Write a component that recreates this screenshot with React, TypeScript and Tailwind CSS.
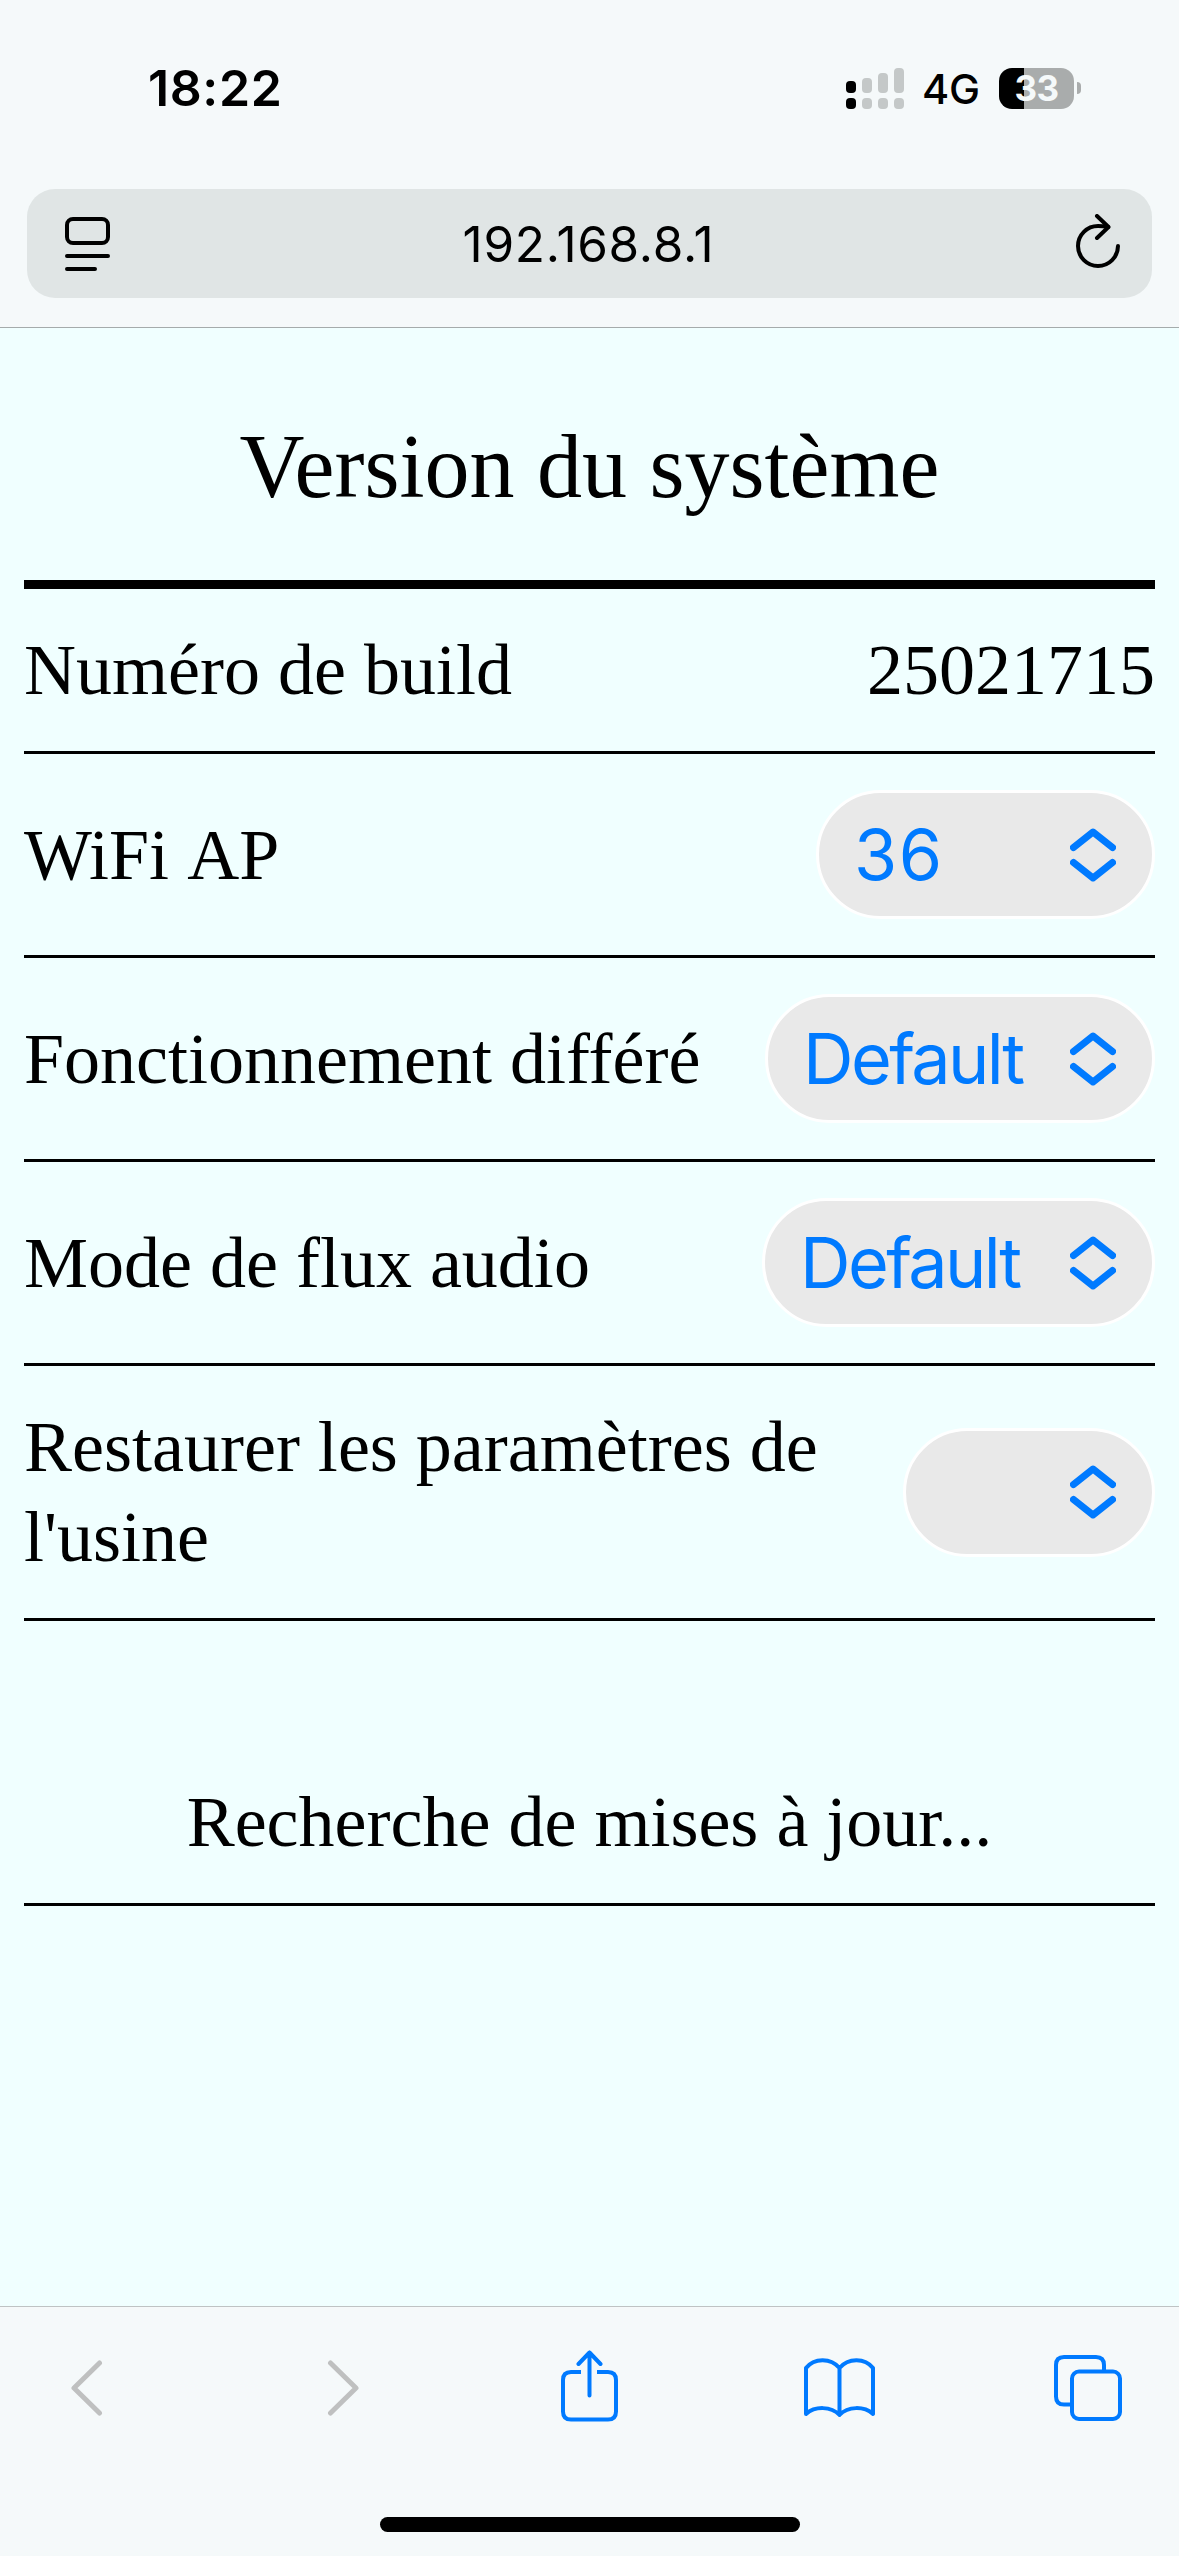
import type { ReactNode } from "react";

const bars = ["h-3", "h-[15px]", "h-5", "h-[25px]"];

const settings = [
  { label: "WiFi AP", value: "36", width: "w-[339px]", spacing: "tracking-[1.5px]" },
  { label: "Fonctionnement différé", value: "Default", width: "w-[390px]", spacing: "tracking-[-2.6px]" },
  { label: "Mode de flux audio", value: "Default", width: "w-[393px]", spacing: "tracking-[-2.6px]" },
  { label: "Restaurer les paramètres de l'usine", value: "", width: "w-[252px]", spacing: "" },
];

function StatusBar() {
  return (
    <div className="flex h-[189px] items-start justify-between pl-[148px] pr-[98px] pt-[58px]">
      <span className="text-[50px] font-semibold leading-[60px] tracking-[0.6px]">18:22</span>
      <div className="flex h-[60px] items-center">
        <div className="flex items-end gap-1.5">
          {bars.map((height, i) => (
            <div key={height} className="flex flex-col gap-[5px]">
              <div className={`${height} w-2.5 rounded ${i === 0 ? "bg-black" : "bg-[#c4c8c8]"}`} />
              <div className={`h-[11px] w-2.5 rounded ${i === 0 ? "bg-black" : "bg-[#c4c8c8]"}`} />
            </div>
          ))}
        </div>
        <span className="ml-[18px] w-[56px] whitespace-nowrap pt-0.5 text-[41.5px] font-medium leading-[60px] tracking-[-0.2px]">
          4G
        </span>
        <div className="ml-[21px] flex h-[41px] w-[75px] items-center justify-center rounded-[13px] bg-[linear-gradient(90deg,#000_25px,#a9acac_25px)]">
          <span className="text-[35px] font-bold leading-none tracking-[-0.5px] text-[#f5f9fa]">33</span>
        </div>
        <div className="ml-[3px] h-3 w-1 rounded-r-full bg-[#a9acac]" />
      </div>
    </div>
  );
}

function AddressBar() {
  return (
    <div className="mx-[27px] flex h-[109px] items-center justify-between rounded-[28px] bg-[#e0e5e5] pl-[38px] pr-8">
      <svg width="45" height="54" viewBox="0 0 45 54" fill="none" stroke="#000" strokeWidth="4" strokeLinecap="round">
        <rect x="2" y="2" width="41" height="24" rx="6" />
        <path d="M2 39h41M2 52h28" />
      </svg>
      <span className="mr-[9px] text-[49.5px] leading-[60px] tracking-[0.7px]">192.168.8.1</span>
      <svg className="mb-[5px]" width="44" height="54" viewBox="0 0 44 54" fill="none" stroke="#000" strokeWidth="4" strokeLinecap="round" strokeLinejoin="round">
        <path d="M42 32A20 20 0 1 1 22 12q5 0 10 1" />
        <path d="M21 2l11.500 11L21 24" />
      </svg>
    </div>
  );
}

function Select({ value, width, spacing }: { value: string; width: string; spacing: string }) {
  return (
    <button
      className={`${width} flex h-[129px] shrink-0 items-center justify-between rounded-full border-[3px] border-white bg-[#e9e9e9] pl-[35px] pr-9 font-[Inter,sans-serif] text-[#007aff]`}
    >
      <span className={`${spacing} whitespace-nowrap text-[70px] leading-[90px]`}>{value}</span>
      <svg width="46" height="54" viewBox="0 0 46 54" fill="none" stroke="currentColor" strokeWidth="7" strokeLinecap="round" strokeLinejoin="round">
        <path d="M3.500 19.500L23 4l19.500 15.500M3.500 34.500L23 50l19.500-15.500" />
      </svg>
    </button>
  );
}

function Row({ label, children }: { label: string; children: ReactNode }) {
  return (
    <div className="flex items-center justify-between border-b-[3px] border-black py-9">
      <span className={`max-w-[840px] ${label === "WiFi AP" ? "[word-spacing:4px]" : ""}`}>{label}</span>
      {children}
    </div>
  );
}

function Toolbar() {
  return (
    <footer className="flex h-[250px] flex-col items-center justify-between border-t border-[#bfc3c4] bg-[#f5f9fa] pb-6">
      <div className="flex h-[162px] w-full items-center pl-[71px]">
        <svg className="text-[#bfc0c0]" width="32" height="56" viewBox="0 0 32 56" fill="none" stroke="currentColor" strokeWidth="5" strokeLinecap="round" strokeLinejoin="round">
          <path d="M28.500 3L3 28l25.500 25" />
        </svg>
        <svg className="ml-[224px] text-[#bfc0c0]" width="32" height="56" viewBox="0 0 32 56" fill="none" stroke="currentColor" strokeWidth="5" strokeLinecap="round" strokeLinejoin="round">
          <path d="M3.500 3L29 28l-25.500 25" />
        </svg>
        <svg className="mb-[4px] ml-[202px]" width="57" height="72" viewBox="0 0 57 72" fill="none" stroke="#007aff" strokeWidth="4" strokeLinecap="round" strokeLinejoin="round">
          <path strokeLinecap="butt" d="M20 22H10q-8 0-8 8v31.500q0 8 8 8h37q8 0 8-8V30q0-8-8-8H36" />
          <path d="M28.500 45.500V2.500M17.500 14l11-11.500 11 11.500" />
        </svg>
        <svg className="ml-[186px]" width="71" height="60" viewBox="0 0 71 60" fill="none" stroke="#007aff" strokeWidth="4" strokeLinecap="round" strokeLinejoin="round">
          <path d="M35.500 10C27-.5 10-.5 2 10v46c9-8 25-8 33.500 1C44 48 60 48 69 56V10C61-.5 44-.5 35.500 10zV57" />
        </svg>
        <svg className="ml-[179px]" width="68" height="66" viewBox="0 0 68 66" fill="none" stroke="#007aff" strokeWidth="4">
          <path d="M16 49.500h-6q-8 0-8-8V10q0-8 8-8h32q8 0 8 8v6" />
          <rect x="18" y="16.500" width="48" height="47.500" rx="7" />
        </svg>
      </div>
      <div className="h-[15px] w-[420px] rounded-full bg-black" />
    </footer>
  );
}

export default function App() {
  return (
    <div className="flex h-[2556px] w-[1179px] flex-col bg-[#f0ffff] font-[Inter,sans-serif] text-black">
      <header className="h-[328px] border-b border-[#a5abab] bg-[#f5f9fa]">
        <StatusBar />
        <AddressBar />
      </header>

      <main className="flex-1 px-6 font-['Liberation_Serif',serif] text-[72px] leading-[90px]">
        <h1 className="h-[261px] border-b-[9px] border-black pt-[88px] text-center text-[90px] leading-[102px]">
          Version du système
        </h1>
        <Row label="Numéro de build">
          <span>25021715</span>
        </Row>
        {settings.map((s) => (
          <Row key={s.label} label={s.label}>
            <Select value={s.value} width={s.width} spacing={s.spacing} />
          </Row>
        ))}
        <p className="border-b-[3px] border-black pb-9 pt-[156px] text-center">Recherche de mises à jour...</p>
      </main>

      <Toolbar />
    </div>
  );
}
